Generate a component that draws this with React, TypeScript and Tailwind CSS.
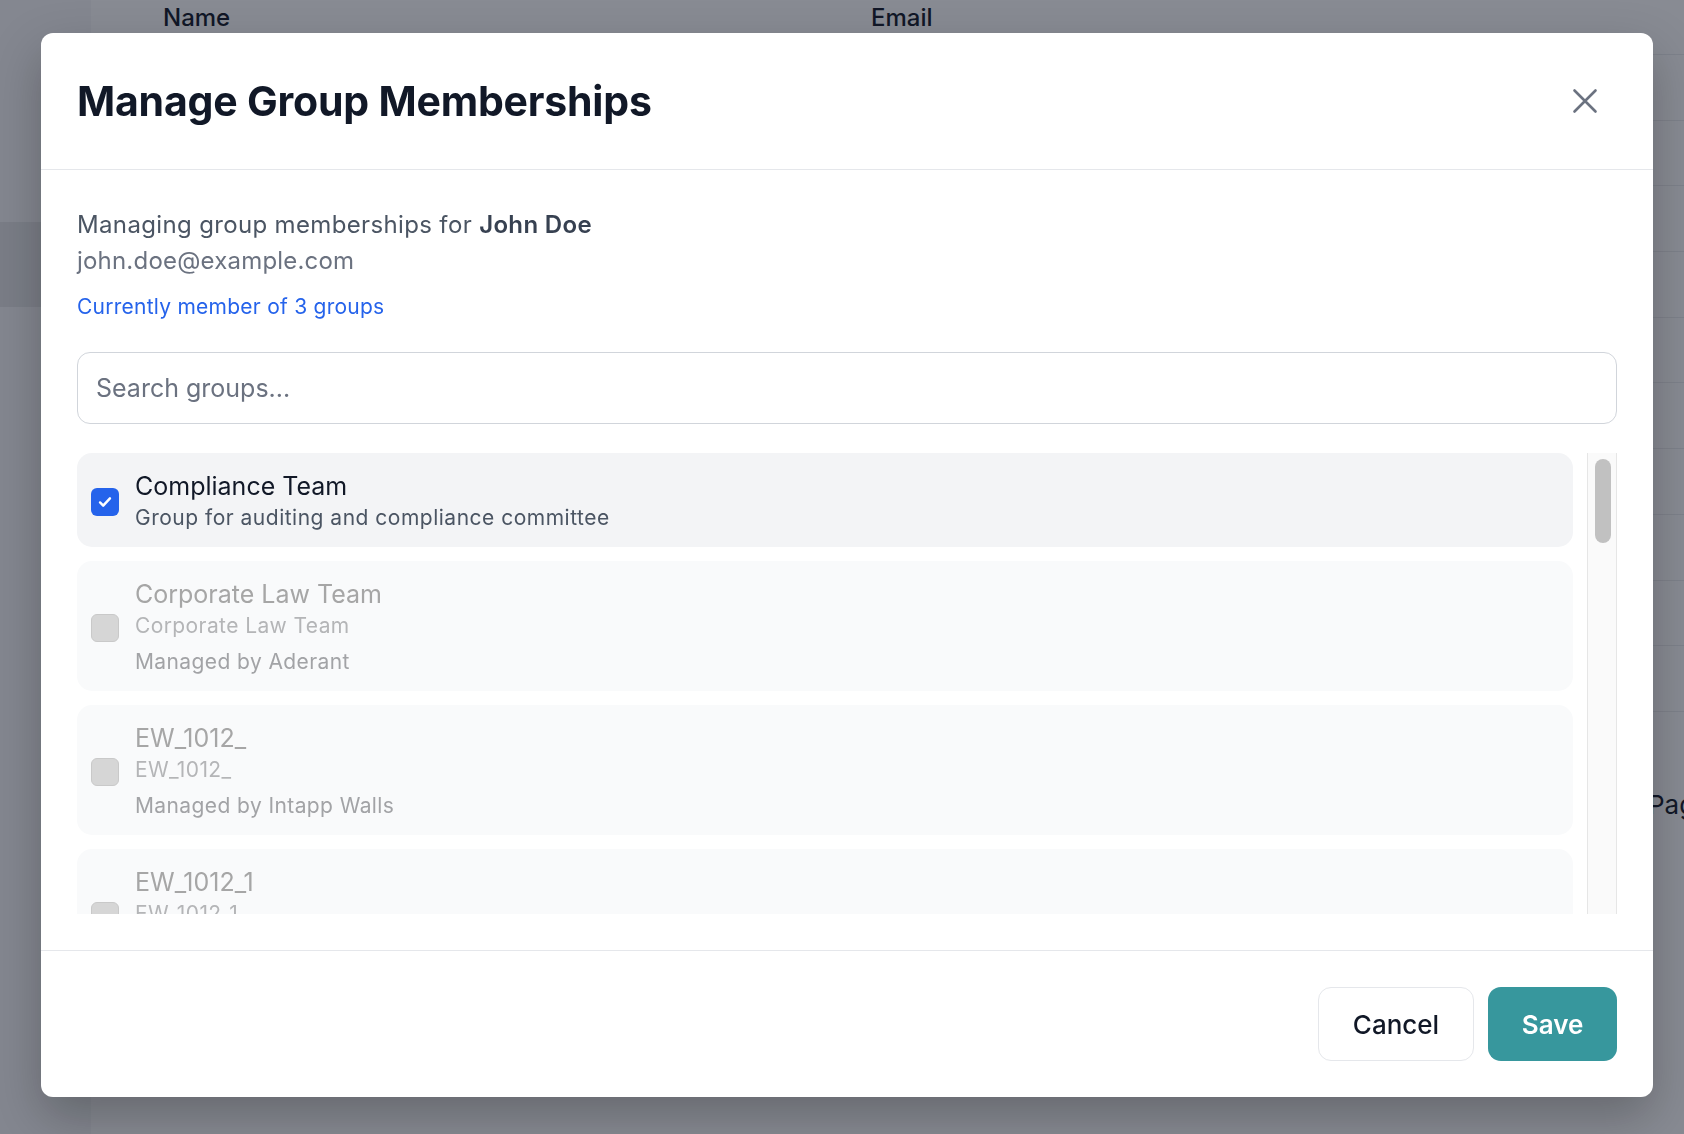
import React from "react";

interface Group {
  id: string;
  name: string;
  description: string;
  managedBy?: string;
  checked?: boolean;
  disabled?: boolean;
}

const groups: Group[] = [
  {
    id: "compliance",
    name: "Compliance Team",
    description: "Group for auditing and compliance committee",
    checked: true,
  },
  {
    id: "corporate-law",
    name: "Corporate Law Team",
    description: "Corporate Law Team",
    managedBy: "Aderant",
    disabled: true,
  },
  {
    id: "ew-1012",
    name: "EW_1012_",
    description: "EW_1012_",
    managedBy: "Intapp Walls",
    disabled: true,
  },
  {
    id: "ew-1012-1",
    name: "EW_1012_1",
    description: "EW_1012_1",
    managedBy: "Intapp Walls",
    disabled: true,
  },
];

function CheckIcon() {
  return (
    <svg viewBox="0 0 16 16" className="h-[18px] w-[18px]" fill="none">
      <path
        d="M3.6 8.4l2.8 2.8 6-6.4"
        stroke="white"
        strokeWidth="2.2"
        strokeLinecap="round"
        strokeLinejoin="round"
      />
    </svg>
  );
}

function GroupRow({ group }: { group: Group }) {
  if (!group.disabled) {
    return (
      <div className="flex shrink-0 items-center gap-[16px] rounded-[15px] bg-[#f3f4f6] pl-[14px] pr-[20px] pt-[18px] pb-[14px]">
        <div className="flex h-[28px] w-[28px] shrink-0 items-center justify-center rounded-[6px] bg-[#2563eb]">
          {group.checked && <CheckIcon />}
        </div>
        <div className="flex flex-col">
          <div className="text-[25px] leading-[30px] text-[#111827]">{group.name}</div>
          <div className="mt-[2px] text-[21px] leading-[30px] tracking-[0.5px] text-[#4b5563]">
            {group.description}
          </div>
        </div>
      </div>
    );
  }

  return (
    <div className="flex shrink-0 items-center gap-[16px] rounded-[15px] bg-[#f9fafb] pl-[14px] pr-[20px] pt-[18px] pb-[14px]">
      <div className="h-[28px] w-[28px] shrink-0 rounded-[6px] border border-[#c9c9c9] bg-[#d6d6d6]" />
      <div className="flex flex-col">
        <div className="text-[25px] leading-[30px] text-[#a6a6a6]">{group.name}</div>
        <div className="mt-[2px] text-[21px] leading-[30px] tracking-[0.4px] text-[#b4b5b7]">
          {group.description}
        </div>
        {group.managedBy && (
          <div className="mt-[6px] text-[21px] leading-[30px] tracking-[0.4px] text-[#a2a3a6]">
            Managed by {group.managedBy}
          </div>
        )}
      </div>
    </div>
  );
}

export default function App() {
  const rows = Array.from({ length: 10 }, (_, i) => i);

  return (
    <div className="relative flex h-screen w-full overflow-hidden bg-white font-['Inter',sans-serif]">
      {/* page behind the dialog */}
      <aside className="flex w-[91px] shrink-0 flex-col bg-[#f6f7f8] pt-[222px]">
        <div className="h-[85px] bg-[#e4e5e7]" />
      </aside>
      <main className="flex min-w-0 flex-1 flex-col">
        <div className="grid h-[55px] grid-cols-[708px_1fr] border-b border-[#ebecee] pl-[72px] pt-[3px] text-[24px] font-medium leading-[30px] text-[#111827]">
          <div>Name</div>
          <div>Email</div>
        </div>
        {rows.map((r) => (
          <div key={r} className="h-[65.7px] border-b border-[#ebecee]" />
        ))}
        <div className="mt-[77px] flex justify-end">
          <div className="w-[36px] whitespace-nowrap text-[26px] leading-[32px] text-[#111827]">
            Page 1 of 2
          </div>
        </div>
      </main>

      {/* overlay + dialog */}
      <div className="fixed inset-0 flex items-start bg-[#111827]/50 pl-[41px] pr-[31px] pt-[33px]">
        <div className="flex h-[1064px] w-full flex-col rounded-[12px] bg-white shadow-[0_20px_50px_rgba(0,0,0,0.25)]">
          <div className="flex h-[137px] shrink-0 items-center justify-between border-b border-[#e5e7eb] pl-[36px] pr-[47px]">
            <h2 className="text-[41px] font-bold leading-[52px] tracking-[-0.2px] text-[#111827]">
              Manage Group Memberships
            </h2>
            <button className="text-[#6b7280]">
              <svg viewBox="0 0 24 24" className="h-[42px] w-[42px]" fill="none">
                <path
                  d="M6 18L18 6M6 6l12 12"
                  stroke="currentColor"
                  strokeWidth="1.5"
                  strokeLinecap="round"
                  strokeLinejoin="round"
                />
              </svg>
            </button>
          </div>

          <div className="flex min-h-0 flex-1 flex-col px-[36px] pt-[37px] pb-[35px]">
            <p className="text-[24px] leading-[36px] tracking-[0.35px] text-[#4b5563]">
              Managing group memberships for{" "}
              <span className="font-semibold text-[#374151]">John Doe</span>
            </p>
            <p className="text-[24px] leading-[36px] tracking-[0.2px] text-[#6b7280]">
              john.doe@example.com
            </p>
            <p className="mt-[13px] text-[21px] leading-[30px] tracking-[0.25px] text-[#2563eb]">
              Currently member of 3 groups
            </p>

            <input
              type="text"
              placeholder="Search groups..."
              className="mt-[30px] h-[72px] w-full shrink-0 rounded-[13px] border border-[#d1d5db] px-[18px] text-[25px] text-[#111827] outline-none placeholder:text-[#6b7280]"
            />

            <div className="mt-[29px] flex h-[461px] shrink-0 gap-[14px]">
              <div className="flex min-w-0 flex-1 flex-col gap-[14px] overflow-hidden">
                {groups.map((g) => (
                  <GroupRow key={g.id} group={g} />
                ))}
              </div>
              <div className="w-[30px] shrink-0 border-x border-[#e6e6e6] bg-[#fafafa] pl-[7px] pt-[6px]">
                <div className="h-[84px] w-[16px] rounded-full bg-[#c1c1c1]" />
              </div>
            </div>
          </div>

          <div className="flex shrink-0 justify-end gap-[14px] border-t border-[#e5e7eb] px-[36px] py-[36px]">
            <button className="h-[74px] w-[156px] rounded-[13px] border border-[#e5e7eb] bg-white text-[26px] font-medium text-[#111827]">
              Cancel
            </button>
            <button className="h-[74px] w-[129px] rounded-[13px] bg-[#37979d] text-[26px] font-semibold text-white">
              Save
            </button>
          </div>
        </div>
      </div>
    </div>
  );
}
